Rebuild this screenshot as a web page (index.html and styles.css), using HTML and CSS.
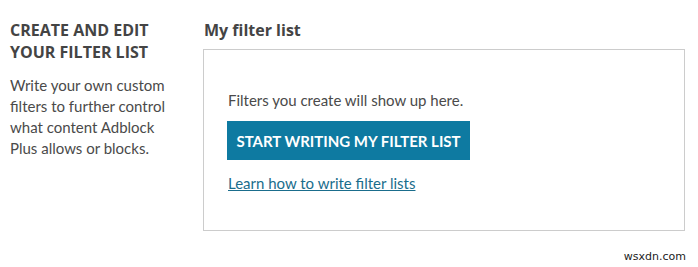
FILE: index.html
```html
<!DOCTYPE html>
<html>
<head>
<meta charset="utf-8">
<link rel="stylesheet" href="styles.css">
</head>
<body>
<div class="page">
  <aside class="intro">
    <h2 class="intro-title">CREATE AND EDIT<br>YOUR FILTER LIST</h2>
    <p class="intro-text">Write your own custom filters to further control what content Adblock Plus allows or blocks.</p>
  </aside>
  <section class="main">
    <h3 class="main-title">My filter list</h3>
    <div class="box">
      <p class="box-text">Filters you create will show up here.</p>
      <button class="btn">START WRITING MY FILTER LIST</button>
      <a class="link" href="#">Learn how to write filter lists</a>
    </div>
  </section>
</div>
<div class="watermark">wsxdn.com</div>
</body>
</html>
```
FILE: styles.css
```css
html, body {
  margin: 0;
  padding: 0;
  background: #fff;
}
body {
  width: 698px;
  height: 267px;
  overflow: hidden;
  position: relative;
  font-family: "Lato", "Open Sans", sans-serif;
  color: #4a4a4a;
}
.page {
  display: flex;
  padding-top: 19px;
}
.intro {
  width: 166px;
  padding-left: 10px;
  padding-right: 27px;
}
.intro-title {
  margin: 0;
  font-family: "Open Sans", sans-serif;
  font-size: 16px;
  line-height: 22px;
  font-weight: 700;
  color: #444;
}
.intro-text {
  margin: 12px 0 0;
  font-size: 15px;
  line-height: 21px;
}
.main {
  width: 482px;
}
.main-title {
  margin: 0 0 8px 1px;
  font-family: "Open Sans", sans-serif;
  font-size: 16px;
  line-height: 22px;
  font-weight: 700;
  color: #444;
}
.box {
  border: 1px solid #cccccc;
  box-sizing: border-box;
  height: 182px;
  padding: 40px 24px 0;
  display: flex;
  flex-direction: column;
  align-items: flex-start;
}
.box-text {
  margin: 0;
  font-size: 15px;
  line-height: 21px;
}
.btn {
  margin-top: 10px;
  margin-left: -1px;
  background: #0e7aa1;
  color: #fff;
  border: 0;
  height: 39px;
  width: 243px;
  font-family: inherit;
  font-size: 15px;
  font-weight: 700;
  padding: 0;
}
.link {
  margin-top: 13px;
  color: #1a6d8c;
  font-size: 15px;
  line-height: 21px;
  text-decoration: underline;
}
.watermark {
  position: absolute;
  right: 12px;
  bottom: 3px;
  font-family: "DejaVu Sans", sans-serif;
  font-size: 11px;
  line-height: 14px;
  color: #222;
}
```
